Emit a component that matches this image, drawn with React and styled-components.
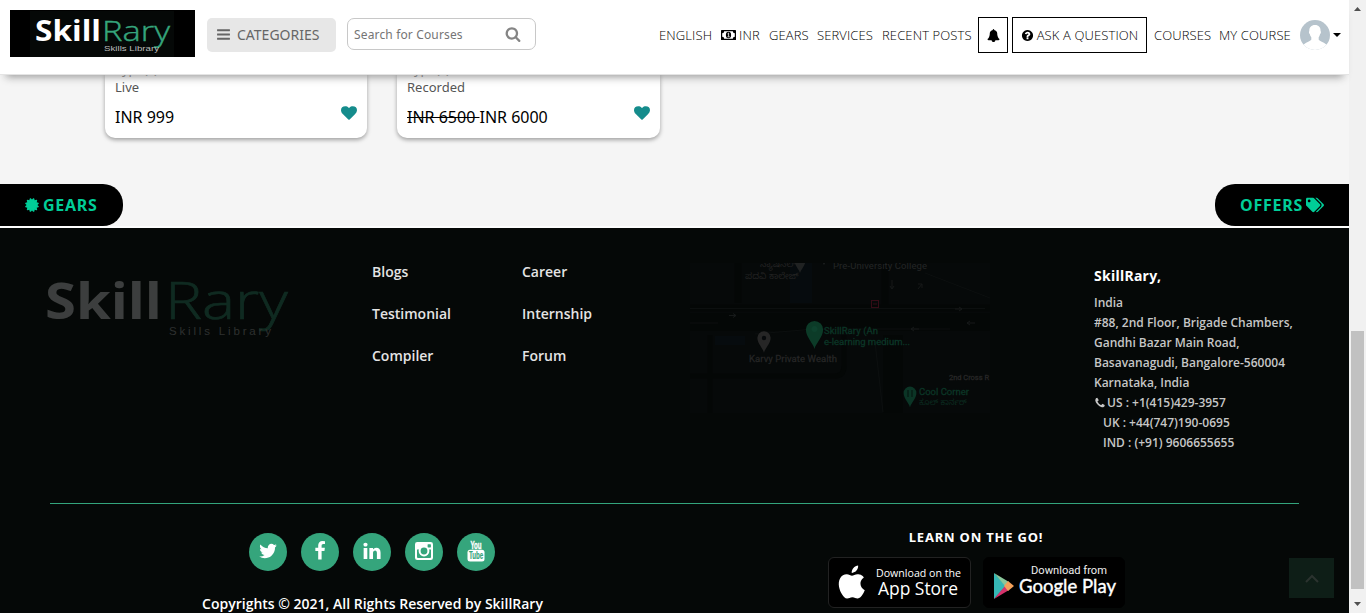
import React from "react";
import styled, { createGlobalStyle } from "styled-components";
import { FaTags } from "react-icons/fa";

const Global = createGlobalStyle`
  * { box-sizing: border-box; }
  body { margin: 0; background: #f5f5f5; font-family: "Open Sans", sans-serif; overflow: hidden; }
  ul { list-style: none; margin: 0; padding: 0; }
`;

const PATHS = {
  bars: "M1664 1344v128q0 26-19 45t-45 19h-1408q-26 0-45-19t-19-45v-128q0-26 19-45t45-19h1408q26 0 45 19t19 45zm0-512v128q0 26-19 45t-45 19h-1408q-26 0-45-19t-19-45v-128q0-26 19-45t45-19h1408q26 0 45 19t19 45zm0-512v128q0 26-19 45t-45 19h-1408q-26 0-45-19t-19-45v-128q0-26 19-45t45-19h1408q26 0 45 19t19 45z",
  search: "M1216 832q0-185-131.5-316.5t-316.5-131.5-316.5 131.5-131.5 316.5 131.5 316.5 316.5 131.5 316.5-131.5 131.5-316.5zm512 832q0 52-38 90t-90 38q-54 0-90-38l-343-342q-179 124-399 124-143 0-273.5-55.5t-225-150-150-225-55.5-273.5 55.5-273.5 150-225 225-150 273.5-55.5 273.5 55.5 225 150 150 225 55.5 273.5q0 220-124 399l343 343q37 37 37 90z",
  heart: "M896 1664q-26 0-44-18l-624-602q-10-8-27.5-26t-55.5-65.5-68-97.5-53.5-121-23.5-138q0-220 127-344t351-124q62 0 126.5 21.5t120 58 95.5 68.5 76 68q36-36 76-68t95.5-68.5 120-58 126.5-21.5q224 0 351 124t127 344q0 221-229 450l-623 600q-18 18-44 18z",
  twitter: "M1684 408q-67 98-162 167 1 14 1 42 0 130-38 259.5t-115.5 248.5-184.5 210.5-258 146-323 54.5q-271 0-496-145 35 4 78 4 225 0 401-138-105-2-188-64.5t-114-159.5q33 5 61 5 43 0 85-11-112-23-185.5-111.5t-73.5-205.5v-4q68 38 146 41-66-44-105-115t-39-154q0-88 44-163 121 149 294.5 238.5t371.5 99.5q-8-38-8-74 0-134 94.5-228.5t228.5-94.5q140 0 236 102 109-21 205-78-37 115-142 178 93-10 186-50z",
  facebook: "M1343 12v264h-157q-86 0-116 36t-30 108v189h293l-39 296h-254v759h-306v-759h-255v-296h255v-218q0-186 104-288.5t277-102.5q147 0 228 12z",
  linkedin: "M477 625v991h-330v-991h330zm21-306q1 73-50.5 122t-135.5 49h-2q-82 0-132-49t-50-122q0-74 51.5-122.5t134.5-48.5 133 48.5 51 122.5zm1166 729v568h-329v-530q0-105-40.5-164.5t-126.5-59.5q-63 0-105.5 34.5t-63.5 85.5q-11 30-11 81v553h-329q2-399 2-647t-1-296l-1-48h329v144h-2q20-32 41-56t56.5-52 87-43.5 114.5-15.5q171 0 275 113.5t104 332.5z",
  bell: "M1728 1408q0 52-38 90t-90 38h-448q0 106-75 181t-181 75-181-75-75-181h-448q-52 0-90-38t-38-90q50-42 91-88t85-119.5 74.5-158.5 50-206 19.5-260q0-152 117-282.5t307-158.5q-8-19-8-39 0-40 28-68t68-28 68 28 28 68q0 20-8 39 190 28 307 158.5t117 282.5q0 139 19.5 260t50 206 74.5 158.5 85 119.5 91 88z",
  question: "M1024 1376v-192q0-14-9-23t-23-9h-192q-14 0-23 9t-9 23v192q0 14 9 23t23 9h192q14 0 23-9t9-23zm256-672q0-88-55.5-163t-138.5-116-170-41q-243 0-371 213-15 24 8 42l132 100q7 6 19 6 16 0 25-12 53-68 86-92 34-24 86-24 48 0 85.5 26t37.5 59q0 38-20 61t-68 45q-63 28-115.5 86.5t-52.5 125.5v36q0 14 9 23t23 9h192q14 0 23-9t9-23q0-19 21.5-49.5t54.5-49.5q32-18 49-28.5t46-35 44.5-48 28-60.5 12.5-81zm384 192q0 209-103 385.5t-279.5 279.5-385.5 103-385.5-103-279.5-279.5-103-385.5 103-385.5 279.5-279.5 385.5-103 385.5 103 279.5 279.5 103 385.5z",
  phone: "M1600 1240q0 27-10 70.5t-21 68.5q-21 50-122 106-94 51-186 51-27 0-53-3.5t-57.5-12.5-47-14.5-55.5-20.5-49-18q-98-35-175-83-127-79-264-216t-216-264q-48-77-83-175-3-9-18-49t-20.5-55.5-14.5-47-12.5-57.5-3.5-53q0-92 51-186 56-101 106-122 25-11 68.5-21t70.5-10q14 0 21 3 18 6 53 76 11 19 30 54t35 63.5 31 53.500q3 4 17.500 25t21.500 35.500 7 28.500q0 20-28.500 50t-62 55-62 53-28.500 46q0 9 5 22.500t8.500 20.500 14 24 11.500 19q76 137 174 235t235 174q2 1 19 11.500t24 14 20.500 8.500 22.500 5q18 0 46-28.500t53-62 55-62 50-28.500q14 0 28.500 7t35.500 21.500 25 17.500q25 15 53.500 31t63.500 35 54 30q70 35 76 53 3 7 3 21z",
  certificate: "M1504 896l138 135q30 28 20 70-12 41-52 51l-188 48 53 186q12 41-19 70-29 31-70 19l-186-53-48 188q-10 40-51 52-12 2-19 2-31 0-51-22l-135-138-135 138q-28 30-70 20-41-11-51-52l-48-188-186 53q-41 12-70-19-31-29-19-70l53-186-188-48q-40-10-52-51-10-42 20-70l138-135-138-135q-30-28-20-70 12-41 52-51l188-48-53-186q-12-41 19-70 29-31 70-19l186 53 48-188q10-41 51-51 41-12 70 19l135 139 135-139q29-30 70-19 41 10 51 51l48 188 186-53q41-12 70 19 31 29 19 70l-53 186 188 48q40 10 52 51 10 42-20 70z",
};

const Svg = styled.svg`
  display: block;
  flex: none;
  fill: currentColor;
`;

const Icon = ({ name, size = 14 }) => (
  <Svg width={size} height={size} viewBox="0 0 1792 1792" aria-hidden="true">
    <path d={PATHS[name]} />
  </Svg>
);

const Window = styled.div`
  display: flex;
  width: 1366px;
  height: 613px;
  overflow: hidden;
`;

const Page = styled.div`
  display: flex;
  flex-direction: column;
  width: 1349px;
  background: #f5f5f5;
`;

const Header = styled.header`
  display: flex;
  align-items: flex-start;
  flex: none;
  height: 75px;
  padding-left: 10px;
  background: #fff;
  border-bottom: 1px solid #e4e4e4;
  box-shadow: 0 8px 8px -6px #999;
  position: relative;
  z-index: 2;
`;

const Brand = styled.a`
  width: 185px;
  height: 47px;
  margin-top: 10px;
  background: #000;
`;

const Categories = styled.button`
  display: flex;
  align-items: center;
  gap: 6px;
  width: 129px;
  height: 34px;
  margin: 18px 0 0 12px;
  padding: 0 0 1px 9px;
  border: 0;
  border-radius: 5px;
  background: #e7e7e7;
  color: #666;
  font: 14px "Noto Sans", sans-serif;
`;

const Search = styled.div`
  display: flex;
  align-items: center;
  justify-content: space-between;
  width: 189px;
  height: 32px;
  margin: 18px 0 0 11px;
  padding: 0 14px 0 6px;
  border: 1px solid #c8c8c8;
  border-radius: 7px;
  color: #757575;
  font: 12px "Noto Sans", sans-serif;
  letter-spacing: 0.15px;
  svg { color: #858585; }
`;

const Nav = styled.nav`
  display: flex;
  align-items: center;
  height: 36px;
  margin: 17px 10px 0 auto;
  color: #000;
  font-size: 13px;
  font-weight: 300;
  letter-spacing: 0.12px;
  white-space: nowrap;
`;

const NavItem = styled.a`
  display: flex;
  align-items: center;
  gap: 3px;
  width: ${(p) => p.$w}px;
  margin-right: ${(p) => p.$gap ?? 8}px;
`;

const NavBox = styled(NavItem)`
  justify-content: center;
  height: 36px;
  border: 1px solid #000;
`;

const Main = styled.main`
  display: flex;
  flex-direction: column;
  justify-content: flex-end;
  height: 109px;
  flex: none;
  overflow: hidden;
  padding: 0 0 46px 105px;
`;

const Cards = styled.div`
  display: flex;
  gap: 30px;
`;

const Card = styled.article`
  display: flex;
  flex-direction: column;
  width: ${(p) => p.$w}px;
  height: 130px;
  justify-content: flex-end;
  padding: 0 10px 9px;
  border-radius: 0 0 10px 10px;
  background: #fff;
  box-shadow: 0 2px 4px rgba(0, 0, 0, 0.35);
`;

const CardMeta = styled.div`
  color: #555;
  font: 13px/18px "Noto Sans", sans-serif;
`;

const CardFoot = styled.div`
  display: flex;
  justify-content: space-between;
  margin-top: 9px;
  color: #000;
  font: 16px/24px "Noto Sans", sans-serif;
  svg { color: #158c8c; }
`;

const Tabs = styled.div`
  display: flex;
  justify-content: space-between;
  height: 44px;
  flex: none;
  border-bottom: 2px solid #fdfdfd;
`;

const Tab = styled.a`
  display: flex;
  align-items: center;
  gap: 3px;
  width: ${(p) => (p.$right ? 134 : 123)}px;
  padding-left: ${(p) => (p.$right ? 25 : 24)}px;
  border-radius: ${(p) => (p.$right ? "20px 0 0 20px" : "0 20px 20px 0")};
  background: #000;
  color: #00cd98;
  font: 700 16px "Noto Sans", sans-serif;
  letter-spacing: 0.75px;
`;

const Footer = styled.footer`
  flex: 1;
  background: #050807;
  color: #fff;
`;

const FooterTop = styled.div`
  display: flex;
  height: 276px;
  margin: 0 50px;
  border-bottom: 1px solid #33a47c;
`;

const FooterLogo = styled.div`
  width: 322px;
  margin-left: -5px;
  padding-top: 48px;
  opacity: 0.22;
`;

const Links = styled.ul`
  width: ${(p) => p.$w}px;
  padding-top: 34px;
  padding-left: 5px;
  font-size: 14px;
  font-weight: 600;
  line-height: 20px;
  color: #e4e4e4;
  li { margin-bottom: 22px; }
`;

const MapBox = styled.div`
  width: 300px;
  padding-top: 35px;
  margin-left: 1px;
  margin-right: 104px;
`;

const Address = styled.address`
  padding-top: 38px;
  font: 600 12px/20px "Open Sans", sans-serif;
  color: #c6c6c6;
  white-space: nowrap;
`;

const AddressTitle = styled.h4`
  margin: 0 0 7px;
  color: #fff;
  font: 700 14px/20px "Noto Sans", sans-serif;
  letter-spacing: 0.3px;
`;

const AddressLine = styled.div`
  display: flex;
  align-items: center;
  gap: 1px;
  padding-left: ${(p) => (p.$indent ? 9 : 0)}px;
`;

const FooterBottom = styled.div`
  display: flex;
  padding-left: 202px;
`;

const Social = styled.div`
  display: flex;
  flex-direction: column;
  align-items: center;
  width: 341px;
  padding-top: 29px;
  font-size: 14px;
  font-weight: 600;
  line-height: 20px;
  white-space: nowrap;
`;

const SocialRow = styled.div`
  display: flex;
  gap: 14px;
  margin: 0 1px 23px 0;
`;

const Round = styled.a`
  display: flex;
  align-items: center;
  justify-content: center;
  width: 38px;
  height: 38px;
  padding-bottom: 2px;
  border-radius: 50%;
  background: #35a57c;
  color: #fff;
`;

const Apps = styled.div`
  width: 296px;
  margin-left: 285px;
  padding-top: 23px;
`;

const AppsTitle = styled.h4`
  margin: 0 0 10px;
  text-align: center;
  font: 700 13px/20px "Noto Sans", sans-serif;
  letter-spacing: 0.8px;
`;

const Badges = styled.div`
  display: flex;
  gap: 12px;
`;

const Badge = styled.a`
  display: flex;
  align-items: center;
  width: ${(p) => p.$w}px;
  height: 51px;
  border: 1px solid ${(p) => p.$line};
  border-radius: 6px;
  background: #000;
`;

const ToTop = styled.button`
  display: flex;
  align-items: center;
  justify-content: center;
  width: 45px;
  height: 40px;
  margin: 54px 0 0 165px;
  padding: 0;
  border: 0;
  background: #0e1e17;
`;

const Track = styled.div`
  display: flex;
  flex-direction: column;
  align-items: center;
  justify-content: space-between;
  width: 17px;
  background: #f1f1f1;
  padding: 6px 0;
`;

const Thumb = styled.div`
  width: 13px;
  height: 258px;
  margin: 307px 0 0 0;
  background: #c1c1c1;
`;

const Logo = ({ width, height }) => (
  <Svg width={width} height={height} viewBox="0 0 244 64">
    <text x="0" y="43" fontFamily="Open Sans" fontWeight="700" fontSize="51" fill="#fff" textLength="117" lengthAdjust="spacingAndGlyphs">Skill</text>
    <text x="120" y="43" fontFamily="Open Sans" fontWeight="300" fontSize="51" fill="#35a57c" stroke="#35a57c" strokeWidth=".6" textLength="123" lengthAdjust="spacingAndGlyphs">Rary</text>
    <text x="124" y="59" fontFamily="Liberation Sans" fontSize="11.500" fill="#bbb" textLength="102">Skills Library</text>
  </Svg>
);

const BrandLogo = () => (
  <Svg width="185" height="47">
    <rect x="20" y="1" width="144" height="46" fill="#050807" />
    <text x="25" y="31" fontFamily="Open Sans" fontWeight="700" fontSize="28" fill="#fff" textLength="66" lengthAdjust="spacingAndGlyphs">Skill</text>
    <text x="92" y="31" fontFamily="Open Sans" fontWeight="300" fontSize="28" fill="#35a57c" stroke="#35a57c" strokeWidth=".4" textLength="68" lengthAdjust="spacingAndGlyphs">Rary</text>
    <text x="94" y="41" fontFamily="Liberation Sans" fontSize="6.500" fill="#bbb" textLength="55" lengthAdjust="spacingAndGlyphs">Skills Library</text>
  </Svg>
);

const Money = () => (
  <Svg width="15" height="10" viewBox="0 0 15 10">
    <rect width="15" height="10" rx=".6" />
    <path fill="#fff" d="M3.200 1.200h8.600q0 2 2 2v3.600q-2 0-2 2H3.200q0-2-2-2V3.200q2 0 2-2z" />
    <ellipse cx="7.500" cy="5" rx="2.600" ry="3.200" />
    <path d="M6.600 3.800L7.600 3v3.600M6.500 6.800h2.200" fill="none" stroke="#fff" strokeWidth=".8" />
  </Svg>
);

const Avatar = () => (
  <Svg width="30" height="30" viewBox="0 0 30 30">
    <defs><clipPath id="face"><circle cx="15" cy="15" r="15" /></clipPath></defs>
    <g clipPath="url(#face)">
      <rect width="30" height="30" fill="#b6c3cc" />
      <path fill="#fff" d="M15 5c3.800 0 5.700 2.500 5.600 6 .6.700.4 2.400-.5 3-.3 1.500-1 2.600-1.400 3.200v2.500c1.200 1.600 4.500 2 7.300 4.600L30 30H0l4-5.700c2.800-2.600 6-3 7.300-4.600v-2.500c-.7-.800-1.300-1.800-1.500-3.200-.9-.6-1.100-2.300-.5-3C9.200 7.500 11.200 5 15 5z" />
    </g>
  </Svg>
);

const Instagram = () => (
  <Svg width="18" height="18" viewBox="0 0 18 18">
    <rect width="18" height="18" rx="2.300" />
    <path fill="#35a57c" d="M2 7.600h14V15q0 1-1 1H3q-1 0-1-1z" />
    <circle cx="9" cy="9" r="5.400" />
    <circle cx="9" cy="9" r="3.400" fill="#35a57c" />
    <rect x="12.600" y="2.200" width="3.300" height="3.200" rx=".6" fill="#35a57c" />
  </Svg>
);

const YouTube = () => (
  <Svg width="18" height="22" viewBox="0 0 18 22">
    <g transform="scale(.62 1)">
      <text x="5.500" y="8.500" fontFamily="Liberation Sans" fontSize="11" textLength="18" lengthAdjust="spacingAndGlyphs" stroke="#fff" strokeWidth=".4">You</text>
    </g>
    <rect x="0.500" y="9.800" width="17" height="11.700" rx="2.500" />
    <g transform="scale(.62 1)">
      <text x="3.200" y="19.500" fontFamily="Liberation Sans" fontSize="10.500" fill="#35a57c" stroke="#35a57c" strokeWidth=".2" textLength="23" lengthAdjust="spacingAndGlyphs">Tube</text>
    </g>
  </Svg>
);

const AppStore = () => (
  <Svg width="141" height="49" viewBox="0 0 141 49">
    <g transform="translate(6.500 4) scale(1.600)" fill="#fff">
      <path d="M18.710 19.500c-.83 1.240-1.710 2.450-3.050 2.470-1.340.03-1.770-.79-3.290-.79-1.530 0-2 .77-3.270.82-1.310.05-2.300-1.320-3.140-2.530C4.250 17 2.940 12.450 4.700 9.390c.87-1.520 2.430-2.480 4.120-2.510 1.280-.02 2.500.87 3.290.87.780 0 2.260-1.070 3.810-.91.650.03 2.470.26 3.640 1.980-.09.060-2.170 1.280-2.150 3.810.03 3.020 2.650 4.030 2.680 4.040-.03.070-.42 1.440-1.380 2.830z" transform="translate(-1.800 .8)" />
      <path d="M13 3.500c.730-.83 1.940-1.460 2.940-1.500.13 1.170-.34 2.350-1.040 3.190-.69.850-1.830 1.510-2.950 1.420-.15-1.150.41-2.350 1.050-3.110z" transform="translate(-1.800 .2)" />
    </g>
    <text x="47" y="18.500" fontFamily="Open Sans" fontSize="11" fill="#fff" textLength="85" lengthAdjust="spacingAndGlyphs">Download on the</text>
    <text x="49" y="37" fontFamily="Open Sans" fontSize="18" fill="#fff" textLength="80" lengthAdjust="spacingAndGlyphs">App Store</text>
  </Svg>
);

const GooglePlay = () => (
  <Svg width="140" height="49" viewBox="0 0 140 49">
    <path d="M10 15v26l12-13z" fill="#35b7b5" />
    <path d="M10 15l15 9-4 4z" fill="#8ac79b" />
    <path d="M10 41l15-9-4-4z" fill="#d6336c" />
    <path d="M24 23l6 5-6 5-4-5z" fill="#f3a05a" />
    <text x="47" y="16" fontFamily="Roboto" fontSize="11.500" fill="#eee" textLength="76" lengthAdjust="spacingAndGlyphs">Download from</text>
    <text x="35" y="35" fontFamily="Lato" fontSize="19.500" fill="#fff" stroke="#fff" strokeWidth=".4" textLength="97" lengthAdjust="spacingAndGlyphs">Google Play</text>
  </Svg>
);

const Pin = ({ x, y, s, fill }) => (
  <path transform={`translate(${x} ${y}) scale(${s})`} fill={fill} d="M0 13C-1 8-8 2-8-5a8 8 0 1 1 16 0C8 2 1 8 0 13z" />
);

const OfficeMap = () => (
  <Svg width="300" height="150" viewBox="0 0 300 150" fontFamily="Roboto">
    <rect width="300" height="150" fill="#060909" />
    <path d="M0 45H300M48 0V40M195 0V45" stroke="#040706" strokeWidth="7" />
    <path d="M0 50H300V68H0zM193 72h20v78h-20z" fill="#040706" />
    <path d="M0 113h145q9 0 9-10V72M20 72v78" fill="none" stroke="#040706" strokeWidth="5" />
    <path d="M100 0h22v40h-22zM25 73h30v9H25z" fill="#060b0e" />
    <path d="M0 45.500H295M0 60h28M65 71l60-5h135M185 79l8 70M235 10l65 25" fill="none" stroke="#0c0f0f" />
    <path d="M39 52.500h7m-3-2 3 2-3 2M265 46h7m-3-2 3 2-3 2M285 60h-8m3-2-3 2 3 2M229 66h-8m3-2-3 2 3 2M202 17v9m-2-3 2 3 2-3M228 26l4-5m-4 0h4v4" fill="none" stroke="#161919" />
    <Pin x="110" y="1" s=".7" fill="#202222" />
    <Pin x="134" y="-4" s=".5" fill="#1d1f1f" />
    <text x="70" y="4" fontSize="9" fill="#222" fontFamily="Noto Sans Kannada, sans-serif">ನ್ಯಾಷನಲ್</text>
    <text x="55" y="16" fontSize="9" fill="#222" fontFamily="Noto Sans Kannada, sans-serif">ಪದವಿ ಕಾಲೇಜ್</text>
    <text x="143" y="6" fontSize="9.500" fill="#242626" textLength="94">Pre-University College</text>
    <rect x="181.500" y="37.500" width="7" height="7" fill="none" stroke="#350c16" />
    <path d="M183 41h4" stroke="#350c16" />
    <Pin x="74" y="79" s=".83" fill="#262626" />
    <circle cx="74" cy="75" r="2.200" fill="#070a0c" />
    <Pin x="124.500" y="72" s="1.080" fill="#0c3b28" />
    <circle cx="124.500" cy="66" r="3" fill="#0e422e" />
    <text x="134" y="71" fontSize="9.500" fill="#0b3526" stroke="#0b3526" strokeWidth=".3" textLength="54">SkillRary (An</text>
    <text x="134" y="82" fontSize="9.500" fill="#0b3526" stroke="#0b3526" strokeWidth=".3" textLength="86">e-learning medium...</text>
    <text x="59" y="99" fontSize="9.500" fill="#252525" stroke="#252525" strokeWidth=".3" textLength="88">Karvy Private Wealth</text>
    <text x="259" y="117" fontSize="7.500" fill="#272727" stroke="#272727" strokeWidth=".3" textLength="40">2nd Cross R</text>
    <Pin x="220" y="134" s=".8" fill="#0b3526" />
    <path d="M218 127v7M222 127v7" stroke="#05120d" />
    <text x="229" y="132" fontSize="9.500" fill="#0b3526" stroke="#0b3526" strokeWidth=".3" textLength="50">Cool Corner</text>
    <text x="229" y="142" fontSize="8" fill="#0b2c20" fontFamily="Noto Sans Kannada, sans-serif">ಕೂಲ್ ಕಾರ್ನರ್</text>
  </Svg>
);

const Arrow = ({ down }) => (
  <Svg width="7" height="5" viewBox="0 0 7 5"><path fill="#505050" d={down ? "M0 0h7L3.500 4z" : "M0 5h7L3.500 1z"} /></Svg>
);

export default function App() {
  return (
    <Window>
      <Global />
      <Page>
        <Header>
          <Brand><BrandLogo /></Brand>
          <Categories><Icon name="bars" size={15} />CATEGORIES</Categories>
          <Search>Search for Courses<Icon name="search" size={16} /></Search>
          <Nav>
            <NavItem $w={54}>ENGLISH</NavItem>
            <NavItem $w={40}><Money />INR</NavItem>
            <NavItem $w={40}>GEARS</NavItem>
            <NavItem $w={57}>SERVICES</NavItem>
            <NavItem $w={90} $gap={6}>RECENT POSTS</NavItem>
            <NavBox $w={30} $gap={4}><Icon name="bell" size={13} /></NavBox>
            <NavBox $w={135} $gap={7}><Icon name="question" size={13} />ASK A QUESTION</NavBox>
            <NavItem $w={57}>COURSES</NavItem>
            <NavItem $w={73}>MY COURSE</NavItem>
            <NavItem $w={39} $gap={0}>
              <Avatar />
              <Svg width="8" height="4" viewBox="0 0 8 4"><path d="M0 0h8L4 4z" /></Svg>
            </NavItem>
          </Nav>
        </Header>
        <Main>
          <Cards>
            <Card $w={262}>
              <CardMeta>Type(s)</CardMeta>
              <CardMeta>Live</CardMeta>
              <CardFoot><span>INR 999</span><Icon name="heart" size={16} /></CardFoot>
            </Card>
            <Card $w={263}>
              <CardMeta>Type(s)</CardMeta>
              <CardMeta>Recorded</CardMeta>
              <CardFoot><span><s>INR 6500 </s>INR 6000</span><Icon name="heart" size={16} /></CardFoot>
            </Card>
          </Cards>
        </Main>
        <Tabs>
          <Tab><Icon name="certificate" size={16} />GEARS</Tab>
          <Tab $right>OFFERS<FaTags size={18} /></Tab>
        </Tabs>
        <Footer>
          <FooterTop>
            <FooterLogo><Logo width={244} height={64} /></FooterLogo>
            <Links $w={150}><li>Blogs</li><li>Testimonial</li><li>Compiler</li></Links>
            <Links $w={172}><li>Career</li><li>Internship</li><li>Forum</li></Links>
            <MapBox><OfficeMap /></MapBox>
            <Address>
              <AddressTitle>SkillRary,</AddressTitle>
              <AddressLine>India</AddressLine>
              <AddressLine>#88, 2nd Floor, Brigade Chambers,</AddressLine>
              <AddressLine>Gandhi Bazar Main Road,</AddressLine>
              <AddressLine>Basavanagudi, Bangalore-560004</AddressLine>
              <AddressLine>Karnataka, India</AddressLine>
              <AddressLine><Icon name="phone" size={12} />US : +1(415)429-3957</AddressLine>
              <AddressLine $indent>UK : +44(747)190-0695</AddressLine>
              <AddressLine $indent>IND : (+91) 9606655655</AddressLine>
            </Address>
          </FooterTop>
          <FooterBottom>
            <Social>
              <SocialRow>
                <Round><Icon name="twitter" size={20} /></Round>
                <Round><Icon name="facebook" size={20} /></Round>
                <Round><Icon name="linkedin" size={20} /></Round>
                <Round><Instagram /></Round>
                <Round><YouTube /></Round>
              </SocialRow>
              Copyrights © 2021, All Rights Reserved by SkillRary
            </Social>
            <Apps>
              <AppsTitle>LEARN ON THE GO!</AppsTitle>
              <Badges>
                <Badge $w={143} $line="#222"><AppStore /></Badge>
                <Badge $w={142} $line="#000"><GooglePlay /></Badge>
              </Badges>
            </Apps>
            <ToTop>
              <Svg width="14" height="9" viewBox="0 0 14 9"><path d="M1 8l6-6 6 6" fill="none" stroke="#2b332f" strokeWidth="2" /></Svg>
            </ToTop>
          </FooterBottom>
        </Footer>
      </Page>
      <Track>
        <Arrow />
        <Thumb />
        <Arrow down />
      </Track>
    </Window>
  );
}
